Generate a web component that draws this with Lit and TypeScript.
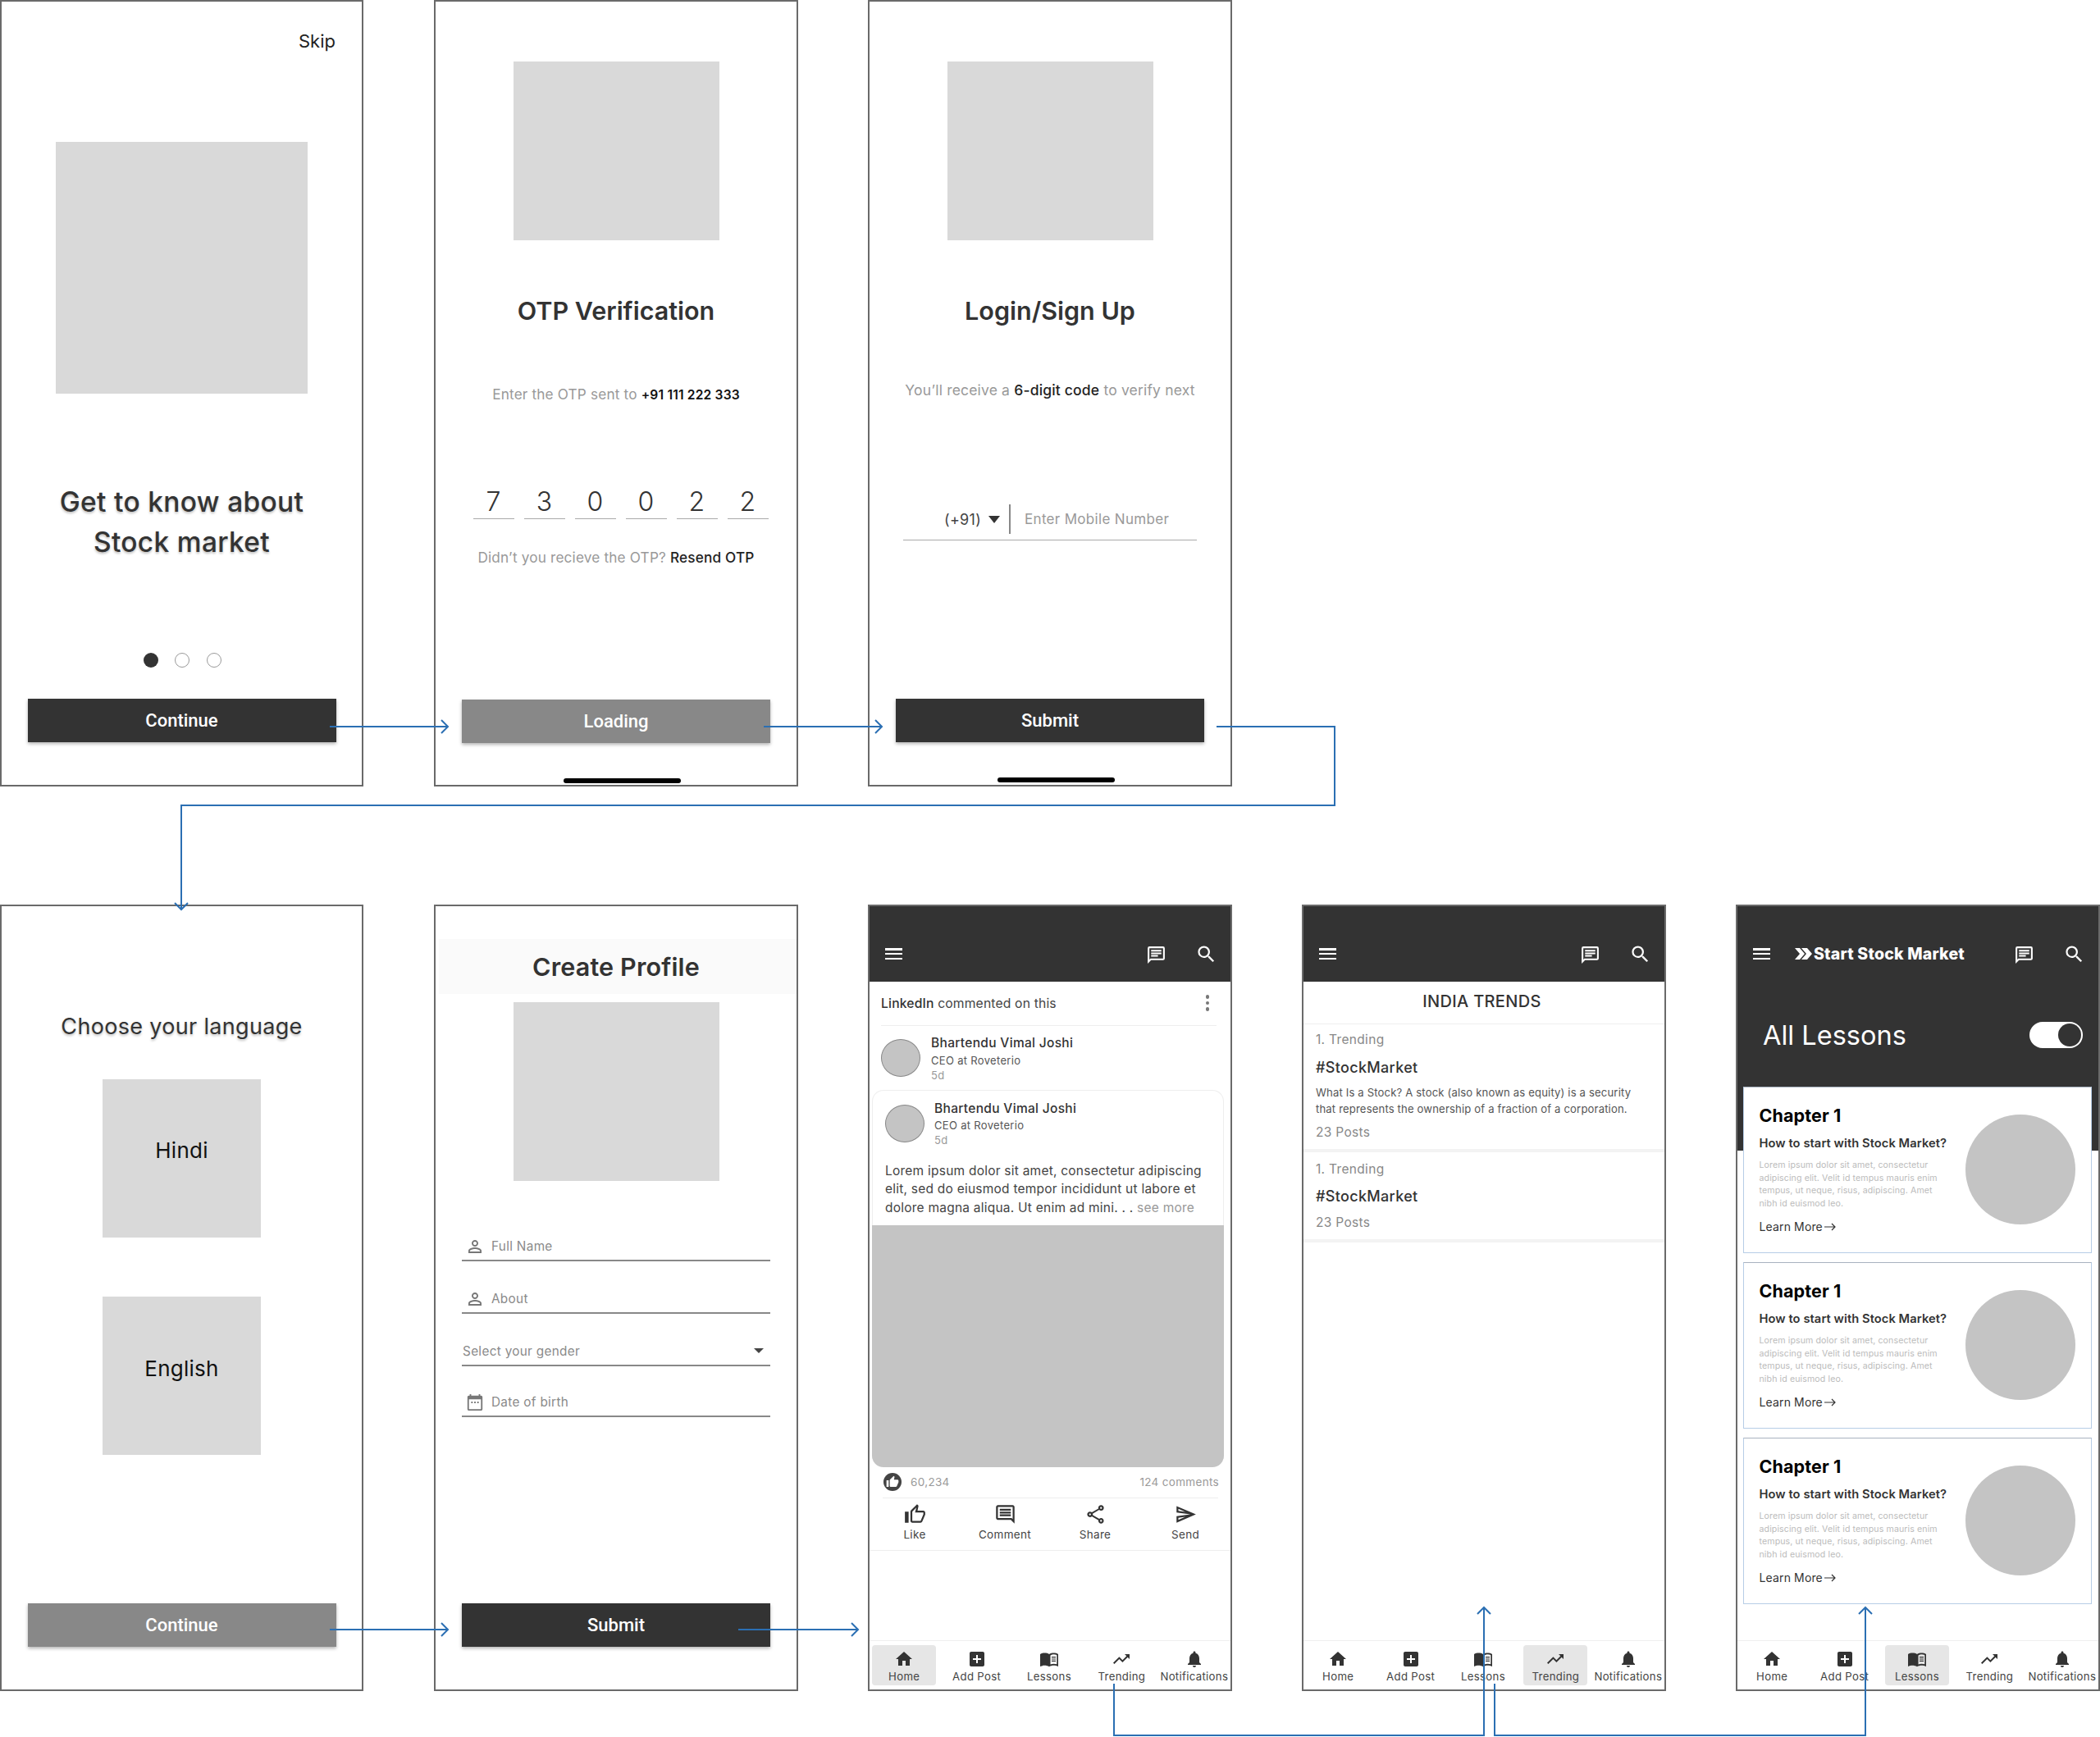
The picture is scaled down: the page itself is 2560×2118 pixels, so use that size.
import { LitElement, html, css, svg } from "lit";
import { customElement } from "lit/decorators.js";

const P = {
  chat: "M20 2H4a2 2 0 0 0-2 2v18l4-4h14a2 2 0 0 0 2-2V4a2 2 0 0 0-2-2zm0 14H5.17L4 17.17V4h16v12zM6 12h8v2H6zm0-3h12v2H6zm0-3h12v2H6z",
  search: "M15.5 14h-.79l-.28-.27A6.471 6.471 0 0 0 16 9.5 6.5 6.5 0 1 0 9.5 16c1.61 0 3.09-.59 4.23-1.57l.27.28v.79l5 4.99L20.49 19l-4.99-5zm-6 0C7.01 14 5 11.99 5 9.5S7.01 5 9.5 5 14 7.01 14 9.5 11.99 14 9.5 14z",
  home: "M10 20v-6h4v6h5v-8h3L12 3 2 12h3v8z",
  add: "M19 3H5c-1.11 0-2 .9-2 2v14c0 1.1.89 2 2 2h14c1.1 0 2-.9 2-2V5c0-1.1-.9-2-2-2zm-2 10h-4v4h-2v-4H7v-2h4V7h2v4h4v2z",
  book: "M12 6C10.5 4.9 8.5 4.5 6.5 4.5S2.5 4.9 1 6v15c1.5-.8 3.5-1.2 5.5-1.2s4 .5 5.5 1.5c1.5-1 3.5-1.5 5.5-1.5s4 .4 5.5 1.2V6c-1.5-1.1-3.5-1.5-5.5-1.5S13.500 4.900 12 6zm1.500 1.500c1.200-.8 2.700-1.200 4-1.200 1.300 0 2.700.2 3.800.7v11.300c-1.100-.4-2.500-.6-3.800-.6-1.300 0-2.800.3-4 .9V7.500zM15 9h5v1.200h-5zm0 2.400h5v1.200h-5zm0 2.400h5V15h-5z",
  trend: "M16 6l2.290 2.290-4.880 4.880-4-4L2 16.590 3.410 18l6-6 4 4 6.300-6.290L22 12V6z",
  bell: "M12 22c1.100 0 2-.9 2-2h-4c0 1.100.89 2 2 2zm6-6v-5c0-3.070-1.640-5.640-4.500-6.320V4c0-.83-.67-1.500-1.500-1.500s-1.500.67-1.500 1.500v.68C7.630 5.360 6 7.920 6 11v5l-2 2v1h16v-1l-2-2z",
  like: "M9 21h9c.83 0 1.540-.5 1.840-1.220l3.020-7.050c.09-.23.14-.47.14-.73v-2c0-1.100-.9-2-2-2h-6.310l.95-4.570.03-.32c0-.41-.17-.79-.44-1.060L14.170 1 7.580 7.590C7.220 7.950 7 8.450 7 9v10c0 1.100.9 2 2 2zM9 9l4.340-4.340L12 10h9v2l-3 7H9V9zM1 9h4v12H1z",
  comment: "M21.990 4c0-1.100-.89-2-1.990-2H4c-1.100 0-2 .9-2 2v12c0 1.100.9 2 2 2h14l4 4-.01-18zM20 4v13.170L18.830 16H4V4h16zM6 12h12v2H6zm0-3h12v2H6zm0-3h12v2H6z",
  share: "M18 16.080c-.76 0-1.440.3-1.960.77L8.910 12.700c.05-.23.09-.46.09-.7s-.04-.47-.09-.7l7.050-4.110c.54.5 1.250.81 2.040.81 1.660 0 3-1.340 3-3s-1.340-3-3-3-3 1.340-3 3c0 .24.04.47.09.7L8.040 9.810C7.500 9.310 6.790 9 6 9c-1.660 0-3 1.340-3 3s1.340 3 3 3c.79 0 1.500-.31 2.040-.81l7.120 4.160c-.05.21-.08.43-.08.65 0 1.610 1.310 2.920 2.920 2.920s2.920-1.310 2.920-2.920-1.310-2.920-2.920-2.920zM18 4c.55 0 1 .45 1 1s-.45 1-1 1-1-.45-1-1 .45-1 1-1zM6 13c-.55 0-1-.45-1-1s.45-1 1-1 1 .45 1 1-.45 1-1 1zm12 7.020c-.55 0-1-.45-1-1s.45-1 1-1 1 .45 1 1-.45 1-1 1z",
  send: "M4.010 6.030l7.510 3.220-7.520-1 .01-2.220m7.500 8.720L4 17.970v-2.220l7.510-1M2.010 3L2 10l15 2-15 2 .01 7L23 12 2.010 3z",
  person: "M12 5.900c1.160 0 2.100.94 2.100 2.100s-.94 2.100-2.100 2.100S9.900 9.160 9.900 8s.94-2.100 2.100-2.100m0 9c2.970 0 6.100 1.460 6.100 2.100v1.100H5.900V17c0-.64 3.130-2.100 6.100-2.100M12 4C9.790 4 8 5.790 8 8s1.790 4 4 4 4-1.790 4-4-1.790-4-4-4zm0 9c-2.670 0-8 1.340-8 4v3h16v-3c0-2.660-5.330-4-8-4z",
  thumb: "M1 21h4V9H1v12zm22-11c0-1.100-.9-2-2-2h-6.310l.95-4.570.03-.32c0-.41-.17-.79-.44-1.060L14.170 1 7.590 7.590C7.220 7.950 7 8.450 7 9v10c0 1.100.9 2 2 2h9c.83 0 1.540-.5 1.840-1.220l3.020-7.050c.09-.23.14-.47.14-.73v-2z",
  cal: "M20 3h-1V1h-2v2H7V1H5v2H4c-1.100 0-2 .9-2 2v16c0 1.100.9 2 2 2h16c1.100 0 2-.9 2-2V5c0-1.100-.9-2-2-2zm0 18H4V8h16v13zM7 11h2v2H7zm4 0h2v2h-2zm4 0h2v2h-2z",
};

const icon = (d: string, cls = "") =>
  html`<svg class="ic ${cls}" viewBox="0 0 24 24" aria-hidden="true"><path d=${d}></path></svg>`;

const arrow = (x: number, y: number, dir: "r" | "d" | "u") => {
  const s = 8;
  const pts =
    dir === "r"
      ? `${x - s},${y - s} ${x},${y} ${x - s},${y + s}`
      : dir === "d"
      ? `${x - s},${y - s} ${x},${y} ${x + s},${y - s}`
      : `${x - s},${y + s} ${x},${y} ${x + s},${y + s}`;
  return svg`<polyline points=${pts}></polyline>`;
};

const WIRES = [
  "402,886 545,886",
  "931,886 1074,886",
  "1483,886 1627,886 1627,982 221,982 221,1108",
  "402,1987 545,1987",
  "900,1987 1045,1987",
  "1358,2053 1358,2116 1809,2116 1809,1960",
  "1822,2053 1822,2116 2274,2116 2274,1960",
];

const NAV = [
  ["Home", P.home],
  ["Add Post", P.add],
  ["Lessons", P.book],
  ["Trending", P.trend],
  ["Notifications", P.bell],
];

const LOREM = [
  "Lorem ipsum dolor sit amet, consectetur",
  "adipiscing elit. Velit id tempus mauris enim",
  "tempus, ut neque, risus, adipiscing. Amet",
  "nibh id euismod leo.",
];

@customElement("app-root")
export class AppRoot extends LitElement {
  static styles = css`
    :host {
      display: block;
      position: relative;
      width: 2560px;
      height: 2118px;
      background: #fff;
      font-family: Inter, "Noto Sans", sans-serif;
      color: #333;
      overflow: hidden;
      letter-spacing: 0.02em;
    }
    * { box-sizing: border-box; }
    .canvas {
      display: grid;
      grid-template-columns: repeat(5, 444px);
      grid-template-rows: 959px 959px;
      column-gap: 85px;
      row-gap: 144px;
    }
    .screen {
      display: flex;
      flex-direction: column;
      align-items: center;
      border: 2px solid #6a6a6a;
      background: #fff;
      overflow: hidden;
    }
    .narrow { width: 443px; }
    .r2c1 { grid-row: 2; grid-column: 1; }
    .r2c2 { grid-row: 2; grid-column: 2; }
    .r2c3 { grid-row: 2; grid-column: 3; }
    .r2c4 { grid-row: 2; grid-column: 4; }
    .r2c5 { grid-row: 2; grid-column: 5; }
    .wires { position: absolute; left: 0; top: 0; pointer-events: none; }
    .wires polyline { fill: none; stroke: #2b6fb3; stroke-width: 2; }
    .ic { display: block; width: 24px; height: 24px; fill: currentColor; }

    .skip { align-self: flex-end; margin: 33px 32px 0 0; font-size: 22px; line-height: 30px; color: #222; letter-spacing: 0; }
    .ph { background: #d9d9d9; }
    .ph1 { width: 307px; height: 307px; margin-top: 108px; }
    .h1 { margin-top: 108px; font-size: 33.500px; font-weight: 500; line-height: 49px; text-align: center; text-shadow: 0 2px 3px rgba(0,0,0,.25); white-space: nowrap; }
    .dots { display: flex; align-items: center; gap: 20.5px; height: 18px; margin: 110px 0 0 1px; }
    .dot { width: 18px; height: 18px; border-radius: 50%; background: #333; }
    .dot.o { background: #fff; border: 1.500px solid #9a9a9a; }

    .btn { width: 376px; height: 53px; display: flex; align-items: center; justify-content: center; background: #333; color: #fff; font: 500 22px Roboto, sans-serif; box-shadow: 0 2px 4px rgba(0,0,0,.3); flex: none; letter-spacing: 0; }
    .btn.gray { background: #888; }
    .m39 { margin-top: 38px; }
    .m160 { margin-top: 160px; }
    .m193 { margin-top: 193px; }
    .m181 { margin-top: 181px; }
    .m226 { margin-top: 227.500px; }

    .ph2 { width: 251px; height: 218px; margin-top: 73px; }
    .title { margin-top: 64px; font-size: 30.500px; font-weight: 600; line-height: 44px; white-space: nowrap; letter-spacing: 0; }
    .sub { font-size: 17.500px; line-height: 26px; color: #999; white-space: nowrap; letter-spacing: 0.01em; }
    .sub b { color: #111; font-weight: 600; font-size: 15.600px; }
    .sub i { font-style: normal; color: #222; font-weight: 500; }
    .sm { font-size: 17.200px; }
    .otp { font-size: 17.200px; }
    .m67 { margin-top: 67px; }
    .m62 { margin-top: 62px; }
    .m35 { margin-top: 34px; }
    .digits { display: flex; gap: 12px; margin: 96px 0 0 11px; }
    .digit { width: 50px; height: 42px; line-height: 42px; text-align: center; font-size: 32px; font-weight: 300; border-bottom: 1.500px solid #aaa; color: #333; }
    .bar { width: 143px; height: 6px; border-radius: 3px; background: #000; margin: 43px 0 0 14px; flex: none; }

    .phone { width: 358px; height: 45px; margin-top: 125px; border-bottom: 1.500px solid #aaa; display: flex; padding: 0 0 6px 50px; align-items: center; font-size: 18px; white-space: nowrap; }
    .phone .code { width: 54px; color: #444; font-weight: 400; }
    .tri { width: 0; height: 0; border: 7.500px solid transparent; border-top: 9px solid #333; border-bottom: 0; }
    .sep { width: 2px; height: 36px; background: #888; margin: 0 17px 0 11px; }
    .phone .hint { color: #999; font-size: 17px; }

    .lang { margin-top: 126.500px; font-size: 27px; line-height: 40px; font-weight: 400; text-shadow: 0 2px 3px rgba(0,0,0,.25); white-space: nowrap; }
    .tile { width: 193px; height: 193px; background: #d9d9d9; text-align: center; font-size: 26px; line-height: 40px; color: #111; flex: none; letter-spacing: 0.01em; }
    .t1 { margin-top: 44.500px; padding-top: 67px; }
    .t2 { margin-top: 72px; padding-top: 68px; }

    .band { align-self: stretch; margin: 40px 0 0 4px; height: 67px; background: #fafafa; display: flex; align-items: center; justify-content: center; font-size: 30.500px; font-weight: 600; padding-right: 4px; flex: none; letter-spacing: 0.005em; }
    .ph3 { width: 251px; height: 218px; margin-top: 10px; flex: none; }
    .field { width: 376px; height: 34px; border-bottom: 2px solid #888; display: flex; align-items: center; padding-left: 4px; font-size: 15.300px; color: #8a8a8a; flex: none; }
    .field .ic { width: 24px; height: 24px; margin-right: 8px; color: #777; }
    .field .cal { width: 22px; height: 22px; margin: 0 9px 0 1px; }
    .field.sel { padding: 0 8px 0 1px; justify-content: space-between; }
    .care { width: 0; height: 0; border: 6px solid transparent; border-top: 6px solid #444; border-bottom: 0; margin-top: -2px; }
    .f1 { margin-top: 63.500px; }
    .f2 { margin-top: 30px; }
    .f3 { margin-top: 30px; }
    .f4 { margin-top: 28px; }

    .head { align-self: stretch; background: #333; color: #fff; padding: 46px 19px 0; height: 92px; flex: none; }
    .head.tall { height: 298px; }
    .hrow { display: flex; align-items: center; height: 24px; }
    .ham { width: 21px; height: 14px; display: flex; flex-direction: column; justify-content: space-between; margin-right: 30px; flex: none; }
    .ham i { display: block; height: 2.500px; background: #fff; }
    .logo { display: flex; align-items: center; gap: 2px; font-size: 19.500px; font-weight: 800; white-space: nowrap; letter-spacing: 0.01em; }
    .logo svg { width: 21px; height: 14px; fill: #fff; flex: none; }
    .spacer { flex: 1; }
    .chat { width: 25px; height: 25px; margin-top: 3px; }
    .srch { width: 27px; height: 27px; margin: 0 -3px 0 35px; }

    .line { display: flex; align-items: center; justify-content: space-between; align-self: stretch; margin: 0 17px 0 14px; height: 54px; border-bottom: 1px solid #eee; font-size: 15.700px; color: #444; flex: none; padding-bottom: 1px; white-space: nowrap; letter-spacing: 0.01em; }
    .line b { font-weight: 500; color: #333; }
    .kebab { display: flex; flex-direction: column; gap: 3px; margin-right: 9px; }
    .kebab i { width: 4.500px; height: 4.500px; border-radius: 50%; background: #777; }
    .person { align-self: stretch; display: flex; flex: none; }
    .p1 { margin: 11px 0 0 14px; gap: 13px; }
    .p2 { margin: 12px 0 0 15px; gap: 12px; }
    .av { width: 48px; height: 46px; border-radius: 50%; background: #c4c4c4; border: 1px solid #888; margin-top: 5px; flex: none; }
    .pn { font-size: 15.500px; line-height: 20px; font-weight: 500; color: #333; white-space: nowrap; }
    .pr { font-size: 13px; line-height: 18px; margin-top: 2px; color: #555; }
    .pt { font-size: 13px; line-height: 18px; color: #999; }
    .p2 .pr { margin-top: 1px; }
    .card { align-self: flex-start; width: 429px; margin: 9px 0 0 3px; flex: none; border: 1px solid #eee; border-bottom: 0; border-radius: 14px 14px 0 0; height: 165px; }
    .ptxt { margin: 17.500px 0 0 15px; font-size: 15.500px; line-height: 22.500px; color: #444; white-space: nowrap; letter-spacing: 0.015em; }
    .ptxt span { color: #999; }
    .pimg { align-self: flex-start; width: 429px; height: 295px; margin-left: 3px; background: #c4c4c4; border-radius: 0 0 14px 14px; flex: none; }
    .likes { align-self: stretch; display: flex; align-items: center; margin: 7px 14px 0 17px; height: 22px; font-size: 13.500px; color: #999; flex: none; }
    .badge { width: 22px; height: 22px; border-radius: 50%; background: #444; display: flex; align-items: center; justify-content: center; color: #fff; margin-right: 11px; }
    .badge .ic { width: 16px; height: 16px; }
    .div1 { align-self: stretch; height: 1px; background: #eee; margin: 8px 15px 0 16px; flex: none; }
    .acts { align-self: stretch; display: grid; grid-template-columns: repeat(4, 1fr); margin-top: 7px; flex: none; }
    .act { display: flex; flex-direction: column; align-items: center; gap: 4px; font-size: 13.500px; line-height: 18px; color: #444; }
    .act .ic { width: 27px; height: 27px; margin: -1.500px 0; color: #333; }
    .div2 { align-self: stretch; height: 1px; background: #eee; margin-top: 10px; flex: none; }
    .nav { align-self: stretch; margin: auto 0 0 -2px; border-top: 1px solid #eee; padding: 5px 0 5px; display: grid; grid-template-columns: repeat(5, 1fr); flex: none; }
    .ni { width: 78px; justify-self: center; height: 49px; border-radius: 4px; padding-top: 5px; display: flex; flex-direction: column; align-items: center; font-size: 13.200px; line-height: 18px; white-space: nowrap; color: #444; }
    .ni.on { background: #e6e6e6; }
    .ni .ic { color: #333; }

    .trh { align-self: stretch; height: 52px; border-bottom: 1px solid #eee; display: flex; align-items: center; justify-content: center; font-size: 20px; font-weight: 500; padding: 0 5px 3px 0; flex: none; }
    .ti { align-self: stretch; padding-left: 15px; flex: none; white-space: nowrap; }
    .k { font-size: 15.500px; line-height: 22px; color: #888; }
    .tag { font-size: 18px; line-height: 26px; font-weight: 500; color: #333; }
    .dsc { font-size: 13.100px; line-height: 20px; color: #555; margin-top: 7px; letter-spacing: 0.012em; }
    .band2 { align-self: stretch; height: 4px; background: #f3f3f3; flex: none; }
    .ks { margin-top: 8px; }
    .tg { margin-top: 10px; }
    .tg2 { margin-top: 9px; }
    .po { margin-top: 8px; }
    .g9 { margin-top: 9px; }
    .g10 { margin-top: 10px; }

    .alrow { display: flex; align-items: center; justify-content: space-between; height: 44px; margin-top: 65px; padding-left: 12px; }
    .al { font-size: 32.500px; font-weight: 400; letter-spacing: 0; white-space: nowrap; }
    .tog { width: 65px; height: 32px; background: #fff; border-radius: 16px; display: flex; align-items: center; justify-content: flex-end; padding-right: 2px; }
    .tog i { width: 28px; height: 28px; border-radius: 50%; background: #333; }
    .cards { align-self: flex-start; margin: -78px 0 0 7px; display: flex; flex-direction: column; gap: 11px; flex: none; position: relative; }
    .cc { width: 425px; height: 203px; background: #fff; border: 1.500px solid #b7cde6; border-top-color: #a8b2bf; display: flex; justify-content: space-between; padding: 18px 19.500px 0 18.500px; }
    .cn { font-size: 21.500px; line-height: 32px; font-weight: 700; color: #000; letter-spacing: 0.005em; }
    .cq { margin-top: 7px; font-size: 14.700px; line-height: 22px; font-weight: 600; color: #333; white-space: nowrap; letter-spacing: 0.005em; }
    .cl { margin-top: 8px; font-size: 10.600px; line-height: 15.500px; color: #bbb; letter-spacing: 0.01em; white-space: nowrap; }
    .cm { margin-top: 11px; font-size: 14px; line-height: 20px; color: #333; display: flex; align-items: center; gap: 2px; letter-spacing: 0.01em; }
    .cm svg { width: 14px; height: 10px; stroke: #333; fill: none; stroke-width: 1.200; }
    .circ { width: 134px; height: 134px; border-radius: 50%; background: #c4c4c4; margin-top: 15px; flex: none; }
  `;

  private header(title = false) {
    return html`<div class="hrow">
      <div class="ham"><i></i><i></i><i></i></div>
      ${title
        ? html`<div class="logo">
            <svg viewBox="0 0 21 14"><path d="M0 0h6l6 7-6 7H0l6-7zM8 0h7l6 7-6 7H8l6-7z"></path></svg>Start Stock Market
          </div>`
        : ""}
      <div class="spacer"></div>
      ${icon(P.chat, "chat")}${icon(P.search, "srch")}
    </div>`;
  }

  private nav(active: number) {
    return html`<div class="nav">
      ${NAV.map(
        ([l, d], i) => html`<div class="ni ${i === active ? "on" : ""}">${icon(d)}<span>${l}</span></div>`
      )}
    </div>`;
  }

  private lesson() {
    return html`<div class="cc">
      <div>
        <div class="cn">Chapter 1</div>
        <div class="cq">How to start with Stock Market?</div>
        <div class="cl">${LOREM.map((l) => html`<div>${l}</div>`)}</div>
        <div class="cm">Learn More
          <svg viewBox="0 0 14 10"><path d="M0 5h13M9 1l4 4-4 4"></path></svg>
        </div>
      </div>
      <div class="circ"></div>
    </div>`;
  }

  render() {
    return html`
      <div class="canvas">
        <section class="screen narrow">
          <div class="skip">Skip</div>
          <div class="ph ph1"></div>
          <div class="h1">Get to know about<br />Stock market</div>
          <div class="dots"><div class="dot"></div><div class="dot o"></div><div class="dot o"></div></div>
          <div class="btn m39">Continue</div>
        </section>

        <section class="screen">
          <div class="ph ph2"></div>
          <div class="title">OTP Verification</div>
          <div class="sub otp m67">Enter the OTP sent to <b>+91 111 222 333</b></div>
          <div class="digits">
            ${"730022".split("").map((d) => html`<div class="digit">${d}</div>`)}
          </div>
          <div class="sub sm m35">Didn’t you recieve the OTP? <i>Resend OTP</i></div>
          <div class="btn gray m160">Loading</div>
          <div class="bar"></div>
        </section>

        <section class="screen">
          <div class="ph ph2"></div>
          <div class="title">Login/Sign Up</div>
          <div class="sub m62">You’ll receive a <i>6-digit code</i> to verify next</div>
          <div class="phone">
            <span class="code">(+91)</span><span class="tri"></span><span class="sep"></span><span class="hint">Enter Mobile Number</span>
          </div>
          <div class="btn m193">Submit</div>
          <div class="bar"></div>
        </section>

        <section class="screen narrow r2c1">
          <div class="lang">Choose your language</div>
          <div class="tile t1">Hindi</div>
          <div class="tile t2">English</div>
          <div class="btn gray m181">Continue</div>
        </section>

        <section class="screen r2c2">
          <div class="band">Create Profile</div>
          <div class="ph ph3"></div>
          <div class="field f1">${icon(P.person)}Full Name</div>
          <div class="field f2">${icon(P.person)}About</div>
          <div class="field sel f3">Select your gender<span class="care"></span></div>
          <div class="field f4">${icon(P.cal, "cal")}Date of birth</div>
          <div class="btn m226">Submit</div>
        </section>

        <section class="screen r2c3">
          <div class="head">${this.header()}</div>
          <div class="line">
            <span><b>LinkedIn</b> commented on this</span>
            <span class="kebab"><i></i><i></i><i></i></span>
          </div>
          <div class="person p1">
            <div class="av"></div>
            <div>
              <div class="pn">Bhartendu Vimal Joshi</div>
              <div class="pr">CEO at Roveterio</div>
              <div class="pt">5d</div>
            </div>
          </div>
          <div class="card">
            <div class="person p2">
              <div class="av"></div>
              <div>
                <div class="pn">Bhartendu Vimal Joshi</div>
                <div class="pr">CEO at Roveterio</div>
                <div class="pt">5d</div>
              </div>
            </div>
            <div class="ptxt">
              Lorem ipsum dolor sit amet, consectetur adipiscing<br />
              elit, sed do eiusmod tempor incididunt ut labore et<br />
              dolore magna aliqua. Ut enim ad mini. . . <span>see more</span>
            </div>
          </div>
          <div class="pimg"></div>
          <div class="likes">
            <span class="badge">${icon(P.thumb)}</span><span>60,234</span>
            <span class="spacer"></span><span>124 comments</span>
          </div>
          <div class="div1"></div>
          <div class="acts">
            <div class="act">${icon(P.like)}Like</div>
            <div class="act">${icon(P.comment)}Comment</div>
            <div class="act">${icon(P.share)}Share</div>
            <div class="act">${icon(P.send)}Send</div>
          </div>
          <div class="div2"></div>
          ${this.nav(0)}
        </section>

        <section class="screen r2c4">
          <div class="head">${this.header()}</div>
          <div class="trh">INDIA TRENDS</div>
          <div class="ti">
            <div class="k ks">1. Trending</div>
            <div class="tag tg">#StockMarket</div>
            <div class="dsc">What Is a Stock? A stock (also known as equity) is a security<br />that represents the ownership of a fraction of a corporation.</div>
            <div class="k po">23 Posts</div>
          </div>
          <div class="band2 g9"></div>
          <div class="ti">
            <div class="k g10">1. Trending</div>
            <div class="tag tg2">#StockMarket</div>
            <div class="k po">23 Posts</div>
          </div>
          <div class="band2 g9"></div>
          ${this.nav(3)}
        </section>

        <section class="screen r2c5">
          <div class="head tall">
            ${this.header(true)}
            <div class="alrow"><span class="al">All Lessons</span><span class="tog"><i></i></span></div>
          </div>
          <div class="cards">${this.lesson()}${this.lesson()}${this.lesson()}</div>
          ${this.nav(2)}
        </section>
      </div>

      <svg class="wires" width="2560" height="2118" viewBox="0 0 2560 2118">
        ${WIRES.map((p) => svg`<polyline points=${p}></polyline>`)}
        ${arrow(546, 886, "r")}${arrow(1075, 886, "r")}${arrow(221, 1109, "d")}
        ${arrow(546, 1987, "r")}${arrow(1046, 1987, "r")}
        ${arrow(1809, 1960, "u")}${arrow(2274, 1960, "u")}
      </svg>
    `;
  }
}
